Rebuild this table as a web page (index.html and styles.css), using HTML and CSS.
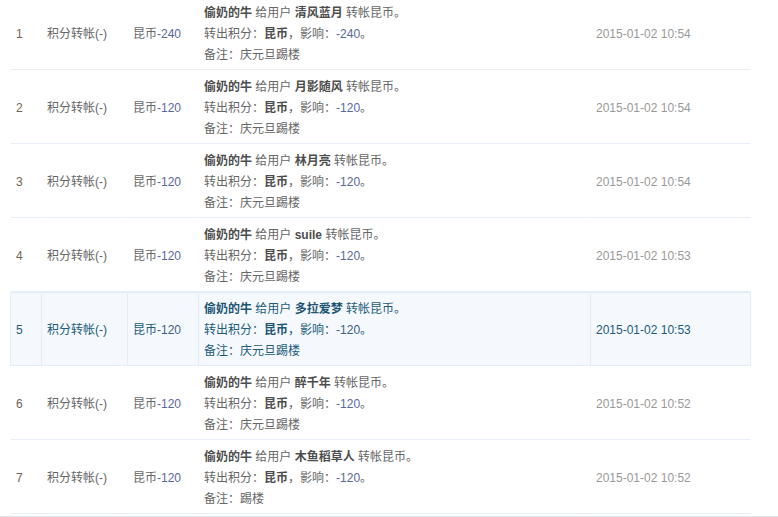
FILE: index.html
```html
<!DOCTYPE HTML>
<html>
<head>
<meta http-equiv="Content-Type" content="text/html; charset=utf-8">
<title>积分记录</title>
<link rel="stylesheet" href="styles.css">
</head>

<body>
<div id="logList">
<table class="log">
<tr>
<td class="idx">1</td>
<td>积分转帐(-)</td>
<td>昆币<span class="num">-240</span></td>
<td class="info"><p><b>偷奶的牛</b> 给用户 <b>清风蓝月</b> 转帐昆币。</p><p>转出积分：<b>昆币</b>，影响：<span class="num">-240</span>。</p><p>备注：庆元旦踢楼</p></td>
<td class="time">2015-01-02 10:54</td>
</tr>
<tr>
<td class="idx">2</td>
<td>积分转帐(-)</td>
<td>昆币<span class="num">-120</span></td>
<td class="info"><p><b>偷奶的牛</b> 给用户 <b>月影随风</b> 转帐昆币。</p><p>转出积分：<b>昆币</b>，影响：<span class="num">-120</span>。</p><p>备注：庆元旦踢楼</p></td>
<td class="time">2015-01-02 10:54</td>
</tr>
<tr>
<td class="idx">3</td>
<td>积分转帐(-)</td>
<td>昆币<span class="num">-120</span></td>
<td class="info"><p><b>偷奶的牛</b> 给用户 <b>林月亮</b> 转帐昆币。</p><p>转出积分：<b>昆币</b>，影响：<span class="num">-120</span>。</p><p>备注：庆元旦踢楼</p></td>
<td class="time">2015-01-02 10:54</td>
</tr>
<tr>
<td class="idx">4</td>
<td>积分转帐(-)</td>
<td>昆币<span class="num">-120</span></td>
<td class="info"><p><b>偷奶的牛</b> 给用户 <b>suile</b> 转帐昆币。</p><p>转出积分：<b>昆币</b>，影响：<span class="num">-120</span>。</p><p>备注：庆元旦踢楼</p></td>
<td class="time">2015-01-02 10:53</td>
</tr>
<tr class="hover">
<td class="idx">5</td>
<td>积分转帐(-)</td>
<td>昆币<span class="num">-120</span></td>
<td class="info"><p><b>偷奶的牛</b> 给用户 <b>多拉爱梦</b> 转帐昆币。</p><p>转出积分：<b>昆币</b>，影响：<span class="num">-120</span>。</p><p>备注：庆元旦踢楼</p></td>
<td class="time">2015-01-02 10:53</td>
</tr>
<tr>
<td class="idx">6</td>
<td>积分转帐(-)</td>
<td>昆币<span class="num">-120</span></td>
<td class="info"><p><b>偷奶的牛</b> 给用户 <b>醉千年</b> 转帐昆币。</p><p>转出积分：<b>昆币</b>，影响：<span class="num">-120</span>。</p><p>备注：庆元旦踢楼</p></td>
<td class="time">2015-01-02 10:52</td>
</tr>
<tr>
<td class="idx">7</td>
<td>积分转帐(-)</td>
<td>昆币<span class="num">-120</span></td>
<td class="info"><p><b>偷奶的牛</b> 给用户 <b>木鱼稻草人</b> 转帐昆币。</p><p>转出积分：<b>昆币</b>，影响：<span class="num">-120</span>。</p><p>备注：踢楼</p></td>
<td class="time">2015-01-02 10:52</td>
</tr>
</table>
</div>
</body>
</html>
```

FILE: styles.css
```css
body{margin:0;font-family:"Liberation Sans","Noto Sans CJK SC",sans-serif;font-size:12px;line-height:21px;color:#666;background:#fff;}
p{margin:0;padding:0;}
b{color:#4d4d4d;}
#logList{padding:0 0 2px 10px;border-bottom:1px solid #dce5f0;overflow:hidden;}
.log{margin-top:-4px;width:741px;table-layout:fixed;border-collapse:separate;border-spacing:0;}
.log td{box-sizing:border-box;padding:6px 5px 3px 5px;border:1px solid #fff;border-top-color:transparent;border-right:0;border-bottom-color:#e8eef6;vertical-align:middle;white-space:nowrap;}
.log td:nth-child(1){width:31px;}
.log td:nth-child(2){width:86px;}
.log td:nth-child(3){width:71px;}
.log td:nth-child(4){width:392px;}
.log td:nth-child(5){width:161px;border-right:1px solid transparent;}
.log .idx{color:#6f6354;}
.log .num{color:#56689c;}
.log .time{color:#999;}
.log tr.hover td{background:#f5f9fe;border-color:#e3edf7;color:#225b7a;}
.log tr.hover b{color:#1d5573;}
.log tr.hover .num{color:#3b5d8a;}
```
